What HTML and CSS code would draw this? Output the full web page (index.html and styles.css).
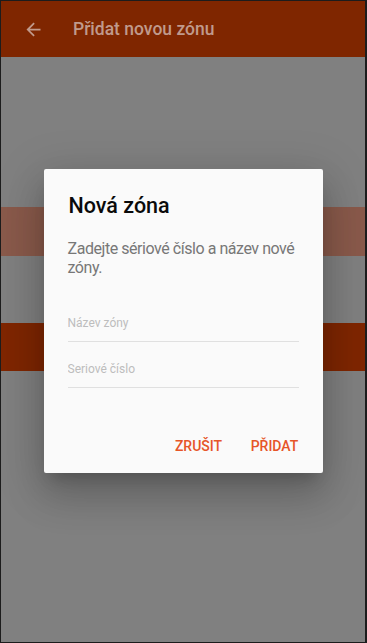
FILE: index.html
```html
<!DOCTYPE html>
<html lang="cs">
<head>
  <meta charset="UTF-8">
  <meta name="viewport" content="width=device-width, initial-scale=1.0">
  <title>Přidat novou zónu</title>
  <link rel="stylesheet" href="styles.css">
</head>
<body>
  <div class="screen">
    <header class="appbar">
      <svg class="appbar-back" viewBox="0 0 24 24" width="21" height="21">
        <path d="M20 11H7.83l5.59-5.59L12 4l-8 8 8 8 1.41-1.41L7.83 13H20v-2z" fill="currentColor"/>
      </svg>
      <h1 class="appbar-title">Přidat novou zónu</h1>
    </header>

    <div class="content">
      <div class="band band-light"></div>
      <div class="band band-dark"></div>
    </div>

    <!-- Modal dialog -->
    <div class="scrim">
      <div class="dialog">
        <h2 class="dialog-title">Nová zóna</h2>
        <p class="dialog-text">Zadejte sériové číslo a název nové zóny.</p>

        <form class="dialog-form">
          <input type="text" class="field" placeholder="Název zóny">
          <input type="text" class="field" placeholder="Seriové číslo">

          <div class="dialog-actions">
            <button type="button" class="btn-text">Zrušit</button>
            <button type="submit" class="btn-text">Přidat</button>
          </div>
        </form>
      </div>
    </div>
  </div>
</body>
</html>
```

FILE: styles.css
```css
* {
  box-sizing: border-box;
}

body {
  margin: 0;
  font-family: Roboto, 'Noto Sans', 'Liberation Sans', sans-serif;
}

.screen {
  position: relative;
  height: 643px;
  overflow: hidden;
  background-color: #808080;
  border: 1px solid #1c1c1c;
  border-right-width: 2px;
}

.appbar {
  height: 56px;
  display: flex;
  align-items: center;
  padding-left: 22px;
  background-color: #7f2600;
  color: #c09a8c;
}

.appbar-back {
  display: block;
  flex: none;
}

.appbar-title {
  margin: 0 0 0 29px;
  font-size: 17.5px;
  font-weight: 500;
}

.content {
  padding-top: 150px;
}

.band {
  height: 48px;
}

.band-light {
  height: 49px;
  background-color: #8a5a4b;
}

.band-dark {
  margin-top: 67px;
  background-color: #7f2600;
}

.scrim {
  position: absolute;
  top: 0;
  left: 0;
  right: 0;
  bottom: 0;
  display: flex;
  align-items: center;
  justify-content: center;
}

.dialog {
  width: 279px;
  margin-bottom: 2px;
  padding: 25px 24px 0;
  background-color: #fafafa;
  border-radius: 2px;
  box-shadow: 0 11px 15px -7px rgba(0, 0, 0, 0.2),
              0 24px 38px 3px rgba(0, 0, 0, 0.14),
              0 9px 46px 8px rgba(0, 0, 0, 0.12);
}

.dialog-title {
  margin: 0 0 0 1px;
  font-size: 21.5px;
  line-height: 24px;
  font-weight: 500;
  color: #0a0a0a;
}

.dialog-text {
  margin: 21px 0 0;
  font-size: 16px;
  line-height: 19px;
  letter-spacing: -0.45px;
  color: #777;
}

.dialog-form {
  margin: 0;
}

.field {
  display: block;
  width: 100%;
  margin: 38px 0 0;
  padding: 0 0 10px;
  border: none;
  border-bottom: 1px solid #e0e0e0;
  background: transparent;
  font-family: inherit;
  font-size: 12px;
  line-height: 16px;
  color: #333;
  outline: none;
}

.field + .field {
  margin-top: 19px;
}

.field::placeholder {
  color: #bdbdbd;
}

.dialog-actions {
  display: flex;
  justify-content: flex-end;
  gap: 12px;
  margin: 40px -8px 0 0;
  padding-bottom: 9px;
}

.btn-text {
  min-width: 64px;
  height: 36px;
  padding: 0 8px;
  border: none;
  background: none;
  font-family: inherit;
  font-size: 14px;
  line-height: 36px;
  font-weight: 500;
  text-transform: uppercase;
  color: #e65528;
  cursor: pointer;
}
```
